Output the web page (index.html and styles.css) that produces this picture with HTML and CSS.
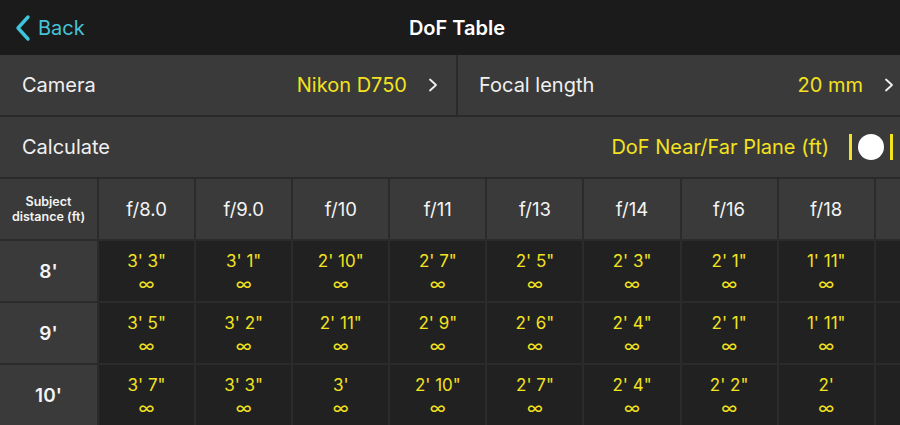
FILE: index.html
```html
<!DOCTYPE html>
<html>
<head lang="en">
    <meta charset="UTF-8">
    <title>DoF Table</title>
    <link rel="stylesheet" href="styles.css">
</head>
<body>
    <div class="navbar">
        <a class="back">
            <svg class="back-icon" width="18" height="28" viewBox="0 0 18 28">
                <polyline points="14,3 4,14 14,25" fill="none" stroke="#3fc4dc" stroke-width="3.4" stroke-linecap="round" stroke-linejoin="round"/>
            </svg>
            <span>Back</span>
        </a>
        <div class="title">DoF Table</div>
        <div class="spacer"></div>
    </div>

    <div class="settings">
        <div class="row row-split">
            <div class="cell cell-camera">
                <span class="label">Camera</span>
                <span class="value">Nikon D750</span>
                <svg class="chev" width="10" height="14" viewBox="0 0 10 14"><polyline points="2,1.5 8,7 2,12.5" fill="none" stroke="#f0f0f0" stroke-width="1.8" stroke-linecap="round" stroke-linejoin="round"/></svg>
            </div>
            <div class="cell">
                <span class="label">Focal length</span>
                <span class="value">20 mm</span>
                <svg class="chev" width="10" height="14" viewBox="0 0 10 14"><polyline points="2,1.5 8,7 2,12.5" fill="none" stroke="#f0f0f0" stroke-width="1.8" stroke-linecap="round" stroke-linejoin="round"/></svg>
            </div>
        </div>
        <div class="row">
            <div class="cell cell-full">
                <span class="label">Calculate</span>
                <span class="value">DoF Near/Far Plane (ft)</span>
                <span class="toggle"><i class="bar"></i><i class="knob"></i><i class="bar"></i></span>
            </div>
        </div>
    </div>

    <div class="table">
        <div class="th th-first">Subject<br>distance (ft)</div>
        <div class="th">f/8.0</div>
        <div class="th">f/9.0</div>
        <div class="th">f/10</div>
        <div class="th">f/11</div>
        <div class="th">f/13</div>
        <div class="th">f/14</div>
        <div class="th">f/16</div>
        <div class="th">f/18</div>
        <div class="th"></div>

        <div class="rh">8'</div>
        <div class="td">3' 3"<span>∞</span></div>
        <div class="td">3' 1"<span>∞</span></div>
        <div class="td">2' 10"<span>∞</span></div>
        <div class="td">2' 7"<span>∞</span></div>
        <div class="td">2' 5"<span>∞</span></div>
        <div class="td">2' 3"<span>∞</span></div>
        <div class="td">2' 1"<span>∞</span></div>
        <div class="td">1' 11"<span>∞</span></div>
        <div class="td"></div>

        <div class="rh">9'</div>
        <div class="td">3' 5"<span>∞</span></div>
        <div class="td">3' 2"<span>∞</span></div>
        <div class="td">2' 11"<span>∞</span></div>
        <div class="td">2' 9"<span>∞</span></div>
        <div class="td">2' 6"<span>∞</span></div>
        <div class="td">2' 4"<span>∞</span></div>
        <div class="td">2' 1"<span>∞</span></div>
        <div class="td">1' 11"<span>∞</span></div>
        <div class="td"></div>

        <div class="rh">10'</div>
        <div class="td">3' 7"<span>∞</span></div>
        <div class="td">3' 3"<span>∞</span></div>
        <div class="td">3'<span>∞</span></div>
        <div class="td">2' 10"<span>∞</span></div>
        <div class="td">2' 7"<span>∞</span></div>
        <div class="td">2' 4"<span>∞</span></div>
        <div class="td">2' 2"<span>∞</span></div>
        <div class="td">2'<span>∞</span></div>
        <div class="td"></div>
    </div>
</body>
</html>
```

FILE: styles.css
```css
* {
    margin: 0;
    padding: 0;
    box-sizing: border-box;
}
body {
    width: 900px;
    height: 425px;
    overflow: hidden;
    background: #2a2a2a;
    font-family: Inter, "Liberation Sans", sans-serif;
    color: #f2f2f2;
}

/* top bar */
.navbar {
    height: 55px;
    background: #1b1b1b;
    display: flex;
    align-items: center;
    padding: 0 14px;
}
.back {
    display: flex;
    align-items: center;
    gap: 6px;
    width: 120px;
    color: #45c3d8;
    font-size: 20px;
}
.title {
    flex: 1;
    text-align: center;
    font-size: 20px;
    font-weight: 600;
    color: #fff;
    margin-left: 14px;
}
.spacer {
    width: 120px;
}

/* setting rows */
.settings {
    display: flex;
    flex-direction: column;
    gap: 2px;
    padding-bottom: 2px;
}
.row {
    height: 60px;
    display: flex;
    gap: 2px;
}
.cell {
    flex: 1;
    display: flex;
    align-items: center;
    background: #3a3a3a;
    padding: 0 6px 0 21px;
    font-size: 20px;
}
.row-split .cell-camera {
    flex: 0 0 456px;
    padding: 0 18px 0 22px;
}
.label {
    flex: 1;
    color: #f0f0f0;
}
.value {
    color: #f3e21f;
}
.chev {
    margin-left: 21px;
}
.cell-full {
    padding: 0 7px 0 22px;
}
.toggle {
    display: flex;
    align-items: center;
    gap: 6px;
    margin-left: 20px;
}
.toggle .bar {
    width: 3px;
    height: 26px;
    background: #f3e21f;
}
.toggle .knob {
    width: 26px;
    height: 26px;
    border-radius: 50%;
    background: #fff;
}

/* table */
.table {
    display: grid;
    grid-template-columns: 97px repeat(8, 95.1px) 1fr;
    grid-auto-rows: 60px;
    gap: 2px;
    background: #2b2b2b;
}
.th, .rh {
    background: #3a3a3a;
    display: flex;
    align-items: center;
    justify-content: center;
    text-align: center;
    font-size: 18.5px;
    color: #f4f4f4;
}
.th-first {
    font-size: 12.5px;
    font-weight: 600;
    line-height: 15px;
}
.rh {
    font-size: 19px;
    font-weight: 600;
}
.td {
    background: #212121;
    display: flex;
    flex-direction: column;
    align-items: center;
    justify-content: center;
    color: #f3e21f;
    font-size: 17px;
    line-height: 23px;
    padding-top: 3px;
}
.td span {
    font-size: 17px;
    line-height: 22px;
}
```
